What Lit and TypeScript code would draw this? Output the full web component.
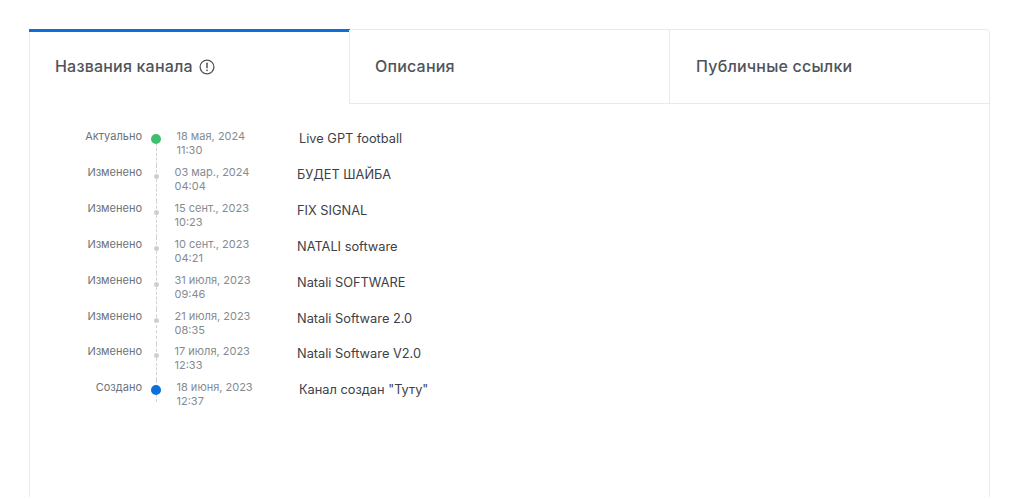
import { LitElement, html, css } from "lit";
import { customElement } from "lit/decorators.js";

const rows = [
  ["Актуально", "18 мая, 2024", "11:30", "Live GPT football", "green"],
  ["Изменено", "03 мар., 2024", "04:04", "БУДЕТ ШАЙБА", ""],
  ["Изменено", "15 сент., 2023", "10:23", "FIX SIGNAL", ""],
  ["Изменено", "10 сент., 2023", "04:21", "NATALI software", ""],
  ["Изменено", "31 июля, 2023", "09:46", "Natali SOFTWARE", ""],
  ["Изменено", "21 июля, 2023", "08:35", "Natali Software 2.0", ""],
  ["Изменено", "17 июля, 2023", "12:33", "Natali Software V2.0", ""],
  ["Создано", "18 июня, 2023", "12:37", 'Канал создан "Туту"', "blue"],
];

@customElement("app-root")
export class AppRoot extends LitElement {
  static styles = css`
    :host {
      display: block;
      height: 497px;
      overflow: hidden;
      background: #fff;
      font-family: Inter, "Noto Sans", sans-serif;
    }
    .page {
      padding: 29px 28px 0 29px;
    }
    .card {
      height: 480px;
      box-sizing: border-box;
      border: 1px solid #e9eaec;
      border-top-right-radius: 4px;
      border-top-left-radius: 4px;
    }
    .tabs {
      display: grid;
      grid-template-columns: 320px 320px 1fr;
      height: 74px;
      margin-left: -1px;
    }
    .tab {
      display: flex;
      align-items: center;
      gap: 6px;
      box-sizing: border-box;
      padding-left: 25px;
      padding-bottom: 2px;
      font-size: 16px;
      letter-spacing: 0.2px;
      font-weight: 500;
      color: #4f545b;
      border-bottom: 1px solid #e9eaec;
      border-left: 1px solid #e9eaec;
    }
    .tab:last-child {
      padding-left: 26px;
    }
    .tab.active {
      border-top: 3px solid #0b6fdc;
      border-bottom: none;
      border-left: none;
      border-right: 1px solid #e9eaec;
      margin-top: -1px;
      padding-left: 26px;
      padding-bottom: 4px;
      width: 321px;
    }
    .tab svg {
      display: block;
      margin-top: 1px;
    }
    .list {
      padding: 25px 0 0 30px;
    }
    .row {
      display: flex;
      height: 35.91px;
    }
    .label {
      width: 82px;
      flex: none;
      text-align: right;
      font-size: 11px;
      line-height: 14px;
      color: #6c7278;
    }
    .marker {
      position: relative;
      flex: none;
      width: 28px;
      display: flex;
      justify-content: center;
      align-items: flex-start;
    }
    .marker::before {
      content: "";
      position: absolute;
      left: 13.5px;
      top: 0;
      bottom: 0;
      border-left: 1px dashed #cfd2d5;
    }
    .row.big .marker::before {
      top: 10px;
    }
    .row.last .marker::before {
      bottom: 14px;
      top: 0;
    }
    .dot {
      position: relative;
      width: 5px;
      height: 5px;
      margin-top: 9px;
      border-radius: 50%;
      background: #cdd0d3;
    }
    .row.big .dot {
      width: 10px;
      height: 10px;
      margin-top: 5px;
    }
    .green .dot {
      background: #3fc06f !important;
    }
    .blue .dot {
      background: #0b6fdc !important;
    }
    .date {
      flex: none;
      width: 127px;
      box-sizing: border-box;
      padding-left: 4.5px;
      font-size: 11px;
      line-height: 14px;
      color: #868b90;
    }
    .row.big .date {
      padding-left: 6.5px;
      width: 129px;
    }
    .name {
      padding-top: 1px;
      font-size: 12.8px;
      line-height: 18px;
      color: #3d4147;
    }
  `;

  render() {
    return html`
      <div class="page">
        <div class="card">
          <div class="tabs">
            <div class="tab active">
              Названия канала
              <svg width="16" height="16" viewBox="0 0 16 16" fill="none">
                <circle cx="8" cy="8" r="6.9" stroke="#4f545b" stroke-width="1.3"></circle>
                <path d="M8 4.2v4.6" stroke="#4f545b" stroke-width="1.5" stroke-linecap="round"></path>
                <circle cx="8" cy="11.3" r="0.9" fill="#4f545b"></circle>
              </svg>
            </div>
            <div class="tab">Описания</div>
            <div class="tab">Публичные ссылки</div>
          </div>
          <div class="list">
            ${rows.map(
              (r, i) => html`
                <div class="row ${r[4] ? "big " + r[4] : ""} ${i === rows.length - 1 ? "last" : ""}">
                  <div class="label">${r[0]}</div>
                  <div class="marker"><span class="dot"></span></div>
                  <div class="date">${r[1]}<br />${r[2]}</div>
                  <div class="name">${r[3]}</div>
                </div>
              `
            )}
          </div>
        </div>
      </div>
    `;
  }
}
